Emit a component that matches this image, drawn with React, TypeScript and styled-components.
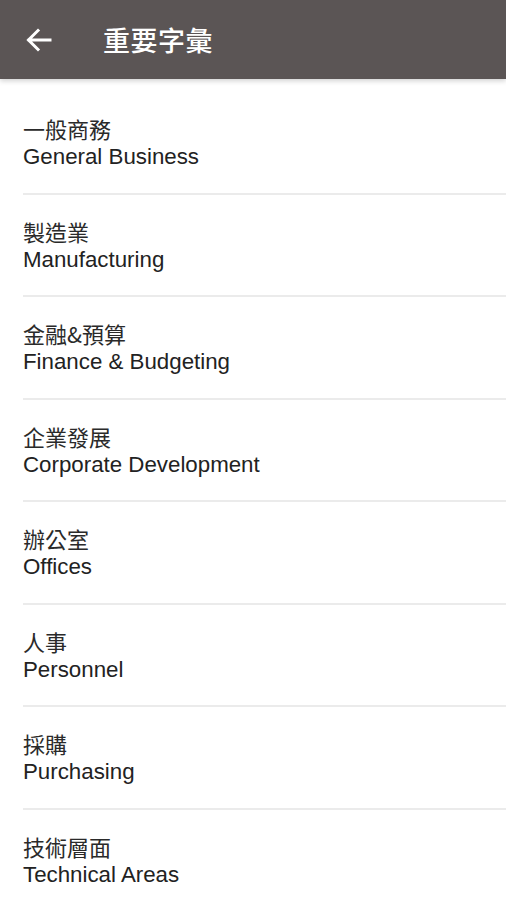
import React from "react";
import styled, { createGlobalStyle } from "styled-components";

const Global = createGlobalStyle`
  html, body { margin: 0; padding: 0; background: #ffffff; }
  body { font-family: "Liberation Sans", Arial, "Noto Sans CJK TC", sans-serif; }
`;

const Page = styled.div`
  width: 506px;
  min-height: 900px;
  background: #fff;
  overflow: hidden;
`;

const Header = styled.header`
  height: 79px;
  background: #5b5555;
  display: flex;
  align-items: center;
  box-shadow: 0 2px 5px rgba(0, 0, 0, 0.18);
  position: relative;
  z-index: 1;
`;

const BackButton = styled.button`
  width: 80px;
  height: 79px;
  padding: 0 0 0 26px;
  margin: 0;
  border: 0;
  background: transparent;
  display: flex;
  align-items: center;
  justify-content: flex-start;
  color: #fff;
`;

const Title = styled.h1`
  margin: 0 0 0 23px;
  font-family: "Noto Sans CJK TC", sans-serif;
  font-size: 27px;
  font-weight: 500;
  color: #ffffff;
  letter-spacing: 0.5px;
`;

const List = styled.ul`
  list-style: none;
  margin: 0;
  padding: 13px 0 0 23px;
`;

const Row = styled.li<{ $last?: boolean }>`
  height: 102.5px;
  box-sizing: border-box;
  border-bottom: ${(p) => (p.$last ? "none" : "2px solid #ebebeb")};
  display: flex;
  flex-direction: column;
  justify-content: flex-start;
  padding-top: 22px;
`;

const Chinese = styled.div`
  font-family: "Noto Sans CJK TC", sans-serif;
  font-size: 22px;
  line-height: 29px;
  color: #2a2a2a;
`;

const English = styled.div`
  font-family: "Liberation Sans", Arial, sans-serif;
  font-size: 22.3px;
  line-height: 28px;
  color: #222;
`;

const items = [
  ["一般商務", "General Business"],
  ["製造業", "Manufacturing"],
  ["金融&預算", "Finance & Budgeting"],
  ["企業發展", "Corporate Development"],
  ["辦公室", "Offices"],
  ["人事", "Personnel"],
  ["採購", "Purchasing"],
  ["技術層面", "Technical Areas"],
];

export default function App() {
  return (
    <Page>
      <Global />
      <Header>
        <BackButton aria-label="back">
          <svg width="26" height="24" viewBox="0 0 26 24" fill="none">
            <path
              d="M24 12H3M12 2.5L2.5 12L12 21.5"
              stroke="#fff"
              strokeWidth="3"
              strokeLinecap="square"
            />
          </svg>
        </BackButton>
        <Title>重要字彙</Title>
      </Header>
      <List>
        {items.map(([zh, en], i) => (
          <Row key={en} $last={i === items.length - 1}>
            <Chinese>{zh}</Chinese>
            <English>{en}</English>
          </Row>
        ))}
      </List>
    </Page>
  );
}
